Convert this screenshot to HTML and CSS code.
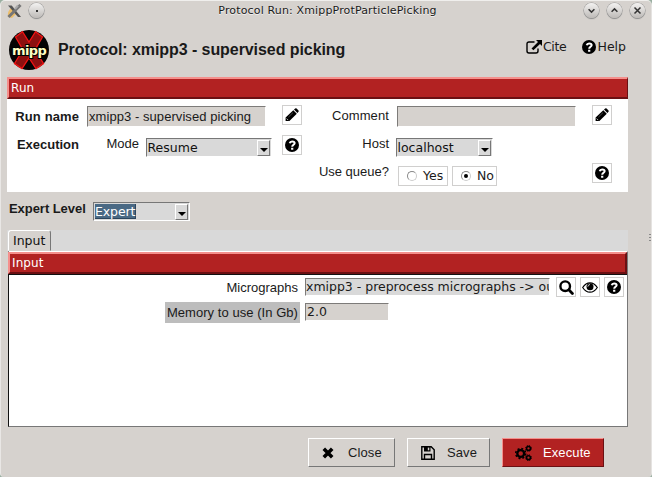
FILE: index.html
```html
<!DOCTYPE html>
<html lang="en">
<head>
<meta charset="utf-8">
<title>Protocol Run: XmippProtParticlePicking</title>
<link rel="stylesheet" href="styles.css">
</head>
<body>
<svg class="defs" width="0" height="0">
  <symbol id="pencil" viewBox="0 0 14 14"><path d="M8.3 2.2 11.8 5.7 4.4 13H.6V9.5zM9 1.5 10.2.4Q10.9-.1 11.6.5L13.5 2.4Q14 3 13.5 3.7L12.4 4.9z"/><path d="M3.4 9.2 8 4.6" stroke="#777" stroke-width=".6"/><path d="M1.6 10.5 3.2 12.1" stroke="#fff" stroke-width=".7"/></symbol>
  <symbol id="help" viewBox="0 0 14 14"><circle cx="7" cy="7" r="7"/><path d="M4.7 5.2Q5.1 3.4 7.1 3.4C9 3.4 9.8 4.4 9.6 5.4 9.4 6.7 7.2 6.9 7.2 8.7" fill="none" stroke="#fff" stroke-width="2"/><path d="M6.1 9.8h2.2v2H6.1z" fill="#fff"/></symbol>
  <symbol id="search" viewBox="0 0 15 15"><circle cx="6.2" cy="6.2" r="4.8" fill="none" stroke="#000" stroke-width="2.4"/><path d="m9.8 9.8 3.6 3.6" stroke="#000" stroke-width="2.8" stroke-linecap="round"/></symbol>
  <symbol id="eye" viewBox="0 0 16 11"><path d="M.7 5.5Q3.7.8 8 .8T15.3 5.5Q12.3 10.2 8 10.2T.7 5.5z" fill="#fff" stroke="#000" stroke-width="1.2"/><circle cx="8" cy="4.8" r="3.5"/><path d="M5.8 4.7Q6 2.7 8 2.5" fill="none" stroke="#fff" stroke-width=".8"/></symbol>
</svg>
<div class="window">
  <header class="titlebar">
    <svg class="appicon" viewBox="0 0 15 15"><path d="M1 13Q0 7 5 3L9 10 5 14z" fill="#ecbd69"/><path d="M1 1.5h3.7L14 13h-3z" fill="#555"/><path d="M13.5 1 1.5 13" stroke="#777" stroke-width="3"/><path d="M11 1.5 8 5" stroke="#aaa" stroke-width="2"/></svg>
    <span class="round dot"></span>
    <span class="wintitle">Protocol Run: XmippProtParticlePicking</span>
    <span class="round"><svg viewBox="0 0 15 15"><path d="m4.6 6.2 2.9 2.9 2.9-2.9"/></svg></span>
    <span class="round"><svg viewBox="0 0 15 15"><path d="m4.6 8.8 2.9-2.9 2.9 2.9"/></svg></span>
    <span class="round"><svg viewBox="0 0 15 15"><path d="m4.5 4.5 6 6m0-6-6 6"/></svg></span>
  </header>
  <div class="heading">
    <svg class="logo" viewBox="0 0 40 40"><circle cx="20" cy="20" r="20" fill="#050404"/><path d="M6.5 7 13.5 1.7 20 12 26.5 1.7 33.5 7 26 19.8 34.5 33.5 27 38.5 20 28 13 38.5 5.5 33.5 14 19.8z" fill="#8c1010" stroke="#f01414" stroke-width="1.3"/><text x="3" y="24.5">mipp</text></svg>
    <h1>Protocol: xmipp3 - supervised picking</h1>
    <a class="link cite"><svg width="16" height="14" viewBox="0 0 16 14"><path d="M8.5 2H3Q1 2 1 4v7q0 2 2 2h7q2 0 2-2V8.5" fill="none" stroke="#000" stroke-width="1.4"/><path d="M10 0h6v6l-2-2-6.6 6.3L5.5 8.4 12 2z"/></svg>Cite</a>
    <a class="link"><svg width="14" height="14"><use href="#help"/></svg>Help</a>
  </div>

  <div class="bar">Run</div>
  <section class="run">
    <div class="row r1">
      <b>Run name</b><div class="entry sans">xmipp3 - supervised picking</div>
      <span class="iconbtn"><svg width="14" height="14"><use href="#pencil"/></svg></span>
      <label>Comment</label><div class="entry"></div>
      <span class="iconbtn"><svg width="14" height="14"><use href="#pencil"/></svg></span>
    </div>
    <div class="row r2">
      <b>Execution</b><label class="mode">Mode</label>
      <div class="combo resume"><span>Resume</span><i></i></div>
      <span class="iconbtn"><svg width="14" height="14"><use href="#help"/></svg></span>
      <label>Host</label><div class="combo host"><span>localhost</span><i></i></div>
    </div>
    <div class="row r3">
      <label>Use queue?</label>
      <div class="radio yes"><i></i>Yes</div><div class="radio no on"><i></i>No</div>
      <span class="iconbtn"><svg width="14" height="14"><use href="#help"/></svg></span>
    </div>
  </section>

  <div class="level"><b>Expert Level</b><div class="combo expert"><span>Expert</span><i></i></div></div>

  <div class="tabs"><span class="tab">Input</span></div>
  <section class="page">
    <div class="bar">Input</div>
    <div class="params">
      <div class="param"><label>Micrographs</label><div class="entry pointer">xmipp3 - preprocess micrographs -&gt; ou</div>
        <span class="iconbtn"><svg width="15" height="15"><use href="#search"/></svg></span>
        <span class="iconbtn"><svg width="16" height="11"><use href="#eye"/></svg></span>
        <span class="iconbtn"><svg width="14" height="14"><use href="#help"/></svg></span>
      </div>
      <div class="param memory"><label>Memory to use (In Gb)</label><div class="entry value">2.0</div></div>
    </div>
  </section>

  <footer>
    <button class="close"><svg width="12" height="12" viewBox="0 0 12 12"><path d="m1.8 1.8 8.4 8.4m0-8.4-8.4 8.4" stroke="#000" stroke-width="3.6"/></svg><span>Close</span></button>
    <button class="save"><svg width="14" height="14" viewBox="0 0 14 14"><path d="M.8.8h9.4l3 3v9.4H.8zM3.5 13V8.5h7V13" fill="none" stroke="#000" stroke-width="1.4"/><path d="M3 1h6.5v4.5H3z"/><path d="M6.8 1.6h1.5v2.7H6.8z" fill="#d6d2ce"/></svg><span>Save</span></button>
    <button class="execute"><svg width="17" height="16" viewBox="0 0 17 16" fill="none" stroke="#000"><circle cx="5.7" cy="8.5" r="3.4" stroke-width="2.3"/><circle cx="5.7" cy="8.5" r="5" stroke-width="1.5" stroke-dasharray="2 1.927"/><circle cx="13.5" cy="3.4" r="1.9" stroke-width="1.5"/><circle cx="13.5" cy="3.4" r="2.9" stroke-width="1" stroke-dasharray="1.3 .978"/><circle cx="13.5" cy="12.7" r="1.9" stroke-width="1.5"/><circle cx="13.5" cy="12.7" r="2.9" stroke-width="1" stroke-dasharray="1.3 .978"/></svg><span>Execute</span></button>
  </footer>
  <div class="grip"></div>
</div>
</body>
</html>
```
FILE: styles.css
```css
* { box-sizing: border-box; }
body { margin: 0; background: #9aafa1; }
.defs { display: block; height: 0; }
.window {
  position: relative; width: 652px; height: 477px; overflow: hidden;
  background: #d6d2ce; color: #1a1a1a;
  border-top: 1px solid #f0efed; border-left: 1px solid #e9e7e5; border-right: 1px solid #e5e3e1;
  border-radius: 5px 5px 4px 4px;
  font: 13px/16px "Liberation Sans", sans-serif;
}
svg { display: block; flex: none; }

.titlebar { display: flex; height: 21px; padding: 2px 6px 0 6px; }
.appicon { width: 15px; height: 15px; margin: 1px 7px 0 0; }
.wintitle { flex: 1; padding-left: 35px; text-align: center; font: 11px/15px "DejaVu Sans", sans-serif; letter-spacing: .15px; white-space: nowrap; text-shadow: 0 1px #f2f0ee; }
.round { width: 15px; height: 15px; margin-left: 8px; border-radius: 50%; background: linear-gradient(#f3f2f1, #bdbab7); box-shadow: 0 0 0 .6px #999, 0 1px 1px #888; }
.round svg { width: 15px; height: 15px; fill: none; stroke: #333; stroke-width: 1.5; }
.titlebar .dot { display: grid; place-items: center; margin-left: 0; }
.dot::after { content: ""; width: 2px; height: 2px; background: #333; }

.heading { display: flex; height: 55px; padding: 8px 25px 0 8px; }
.logo { width: 40px; height: 40px; }
.logo text { font: bold 13px "DejaVu Sans", sans-serif; letter-spacing: -.6px; fill: #ffffc4; stroke: #000; stroke-width: 2px; paint-order: stroke; }
h1 { flex: 1; margin: 10px 0 0 9px; font-size: 16px; line-height: 20px; letter-spacing: -.07px; white-space: nowrap; }
.link { display: flex; height: 16px; margin-top: 9px; align-items: center; gap: 2px; font: 12.5px/16px "DejaVu Sans", sans-serif; }
.cite { margin-right: 15px; gap: 1px; letter-spacing: -.3px; }

.bar { height: 22px; margin: 0 23px 0 6px; padding-left: 2px; border: 2px solid; border-color: #f58f8c #6b1013 #6b1013 #f58f8c; border-right-width: 1px; background: #b22222; color: #fff; font: 12px/18px "DejaVu Sans", sans-serif; letter-spacing: .1px; }
.run { height: 93px; margin: 0 23px 0 6px; padding-top: 6px; background: #fff; }
.row { display: grid; height: 30px; align-items: start; }
.row label, .row b { text-align: right; white-space: nowrap; }
.r1 { grid-template-columns: 72px 187px 36px 87px 187px 36px; }
.r1 b { margin: 4px 0 0 -4px; letter-spacing: .1px; }
.r1 label { margin-top: 3px; letter-spacing: .1px; }
.r1 .entry { margin: 1px 0 0 8px; }
.r1 .iconbtn { margin-left: 16px; }
.r2 { grid-template-columns: 72px 60px 133px 30px 87px 104px; }
.r2 b { margin-top: 2px; }
.r2 label { margin-top: 1px; }
.r2 .combo { margin: 3px 0 0 7px; }
.r2 .iconbtn { margin-left: 10px; }
.r3 { grid-template-columns: 382px 59px 49px 115px; height: 26px; margin-top: -2px; }
.r3 label { margin-top: 1px; }
.r3 .radio { margin-top: 3px; }
.r3 .yes { margin-left: 9px; }
.r3 .no { margin-left: 4px; }
.r3 .iconbtn { justify-self: end; }
.entry { height: 21px; padding-left: 2px; overflow: hidden; white-space: nowrap; background: #d6d2ce; border-top: 1px solid #7d7b79; border-left: 1px solid #7d7b79; border-bottom: 1px solid #fff; border-right: 1px solid #fff; line-height: 20px; }
.sans { padding-left: 1px; letter-spacing: .06px; }
.iconbtn { display: grid; place-items: center; width: 20px; height: 20px; flex: none; border: 1px solid #d0cfce; background: #fff; }

.combo { display: flex; justify-content: space-between; height: 19px; padding: 1px; background: #d9d9d9; border: 1px solid; border-color: #777 #fff #fff #777; font: 12.5px/16px "DejaVu Sans", sans-serif; color: #111; }
.combo i { display: grid; place-items: center; width: 13px; height: 16px; border: 1px solid; border-color: #fff #777 #777 #fff; }
.combo i::after { content: ""; border: 4px solid transparent; border-top-color: #000; border-bottom: 0; margin-top: 4px; }
.resume { width: 126px; }
.resume span, .host span { margin-left: -.5px; }
.host { width: 97px; }
.radio { display: flex; align-items: center; height: 20px; padding-left: 8px; border: 1px solid #d0cfce; font: 12.5px/18px "DejaVu Sans", sans-serif; }
.radio i { display: grid; place-items: center; width: 10px; height: 10px; margin-right: 6px; border: 1px solid; border-color: #888 #ccc #ccc #888; border-radius: 50%; }
.on i::after { content: ""; width: 4px; height: 4px; border-radius: 50%; background: #000; }

.level { display: flex; height: 38px; padding: 9px 0 0 8px; white-space: nowrap; }
.level b { width: 77px; margin-right: 7px; letter-spacing: -.05px; }
.expert { width: 97px; margin-top: 1px; }
.expert span { height: 15px; line-height: 15px; letter-spacing: -.1px; background: #4a6984; color: #fff; border: solid #2c465e; border-width: 0 1px 1px 0; }

.tabs { height: 21px; margin: 0 23px 0 6px; background: #d9d9d9; padding-left: 1px; }
.tab { display: block; width: 43px; height: 21px; padding-left: 4px; border: 1px solid; border-color: #fff #777 transparent #fff; border-radius: 3px 3px 0 0; background: #d6d2ce; font: 12.5px/20px "DejaVu Sans", sans-serif; color: #111; }
.page { height: 176px; margin: 0 23px 0 7px; border: 1px solid; border-color: #fff #777 #777 #111; }
.page .bar { margin: 0 0 0 -1px; border-right-width: 2px; }
.params { height: 152px; border-top: 1px solid #111; background: #fff; padding-top: 2px; }
.param { display: flex; height: 25px; }
.param label { width: 289px; margin: 3px 7px 0 0; text-align: right; }
.param .entry { height: 18px; margin-top: 1px; padding-left: 1px; font: 12.5px/16px "DejaVu Sans", sans-serif; }
.param .pointer { width: 245px; margin-right: 6px; padding-left: 0; background: #d9d9d9; letter-spacing: -.01px; }
.param .iconbtn { margin-right: 4px; }
.param .iconbtn:last-child { margin-right: 0; }
.memory label { width: 135px; height: 21px; margin: 0 5px 0 156px; padding-right: 2px; background: #bdbdbd; line-height: 21px; letter-spacing: .05px; white-space: nowrap; }
.value { width: 84px; }

footer { display: flex; padding: 11px 0 0 307px; gap: 12px; }
button { display: flex; align-items: center; height: 29px; padding: 0; border: 1px solid; border-color: #fff #777 #777 #fff; background: #d6d2ce; color: #1a1a1a; font: 13px/16px "Liberation Sans", sans-serif; letter-spacing: .1px; }
.close { width: 87px; padding-left: 13px; }
.close span { margin-left: 14px; }
.save { width: 83px; padding-left: 13px; }
.save span { margin-left: 12px; }
.execute { width: 102px; padding-left: 12px; background: #b22222; color: #fff; border-color: #f58f8c #6b1013 #6b1013 #f58f8c; }
.execute span { margin-left: 11px; }
.grip { position: absolute; right: 0; top: 233px; width: 2px; height: 9px; background: repeating-linear-gradient(#888 0 1px, transparent 1px 3px); }
```
